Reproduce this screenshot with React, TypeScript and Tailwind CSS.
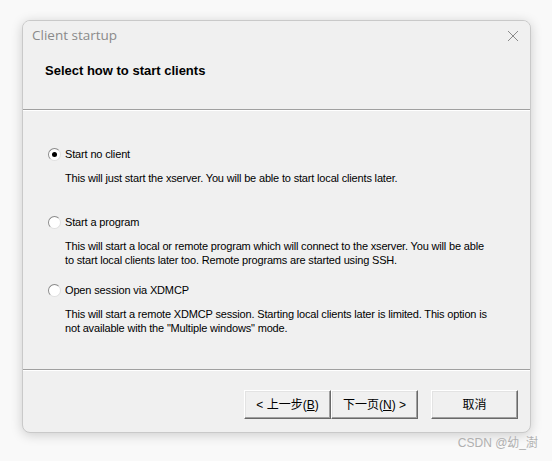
const sans = { fontFamily: '"Liberation Sans", "Noto Sans CJK SC", sans-serif' };

function Radio({ checked }: { checked?: boolean }) {
  return (
    <span className="relative mt-[1px] flex h-[13px] w-[13px] shrink-0 items-center justify-center rounded-full border border-[#8a8a8a] border-b-[#e0e0e0] border-r-[#e0e0e0] bg-white">
      {checked ? <span className="h-[5px] w-[5px] rounded-full bg-black" /> : null}
    </span>
  );
}

function Option({
  label,
  desc,
  checked,
}: {
  label: string;
  desc: string[];
  checked?: boolean;
}) {
  return (
    <div className="flex h-[68px] flex-col">
      <div className="flex items-center gap-[4px] pl-[25px]">
        <Radio checked={checked} />
        <span className="text-[11px] tracking-[-0.15px] text-black">{label}</span>
      </div>
      <div className="mt-[8px] pl-[42px] text-[11px] leading-[14px] tracking-[-0.17px] text-black">
        {desc.map((d) => (
          <div key={d}>{d}</div>
        ))}
      </div>
    </div>
  );
}

function Btn({ children }: { children: React.ReactNode }) {
  return (
    <button
      type="button"
      className="flex h-[29px] w-[87px] items-center justify-center border border-[#ffffff] border-b-[#696969] border-r-[#696969] bg-[#f0f0f0] text-[12px] text-black shadow-[inset_-1px_-1px_0_#a0a0a0,inset_1px_1px_0_#e3e3e3]"
    >
      {children}
    </button>
  );
}

export default function App() {
  return (
    <div className="relative h-[461px] w-[552px] bg-[#f9f9f9]" style={sans}>
      <div className="absolute left-[22px] top-[20px] flex h-[413px] w-[509px] flex-col overflow-hidden rounded-[8px] border border-[#c9c9c9] bg-[#f0f0f0] shadow-[0_2px_12px_rgba(0,0,0,0.18)]">
        <div className="flex h-[28px] items-center justify-between bg-[#f0f0f0] pl-[9px] pr-[9px]">
          <span className="text-[13.5px] text-[#8a8a8a]" style={{ fontFamily: '"Open Sans", "Liberation Sans", sans-serif' }}>
            Client startup
          </span>
          <svg width="12" height="12" viewBox="0 0 12 12" className="mr-[2px] mt-[2px]">
            <path d="M1 1L11 11M11 1L1 11" stroke="#8a8a8a" strokeWidth="1" />
          </svg>
        </div>
        <div className="h-[60px] bg-[#f0f0f0] pl-[22px] pt-[9px]">
          <span className="text-[13px] font-bold text-black">Select how to start clients</span>
        </div>
        <div className="h-px bg-[#a0a0a0]" />
        <div className="h-px bg-white" />
        <div className="flex flex-1 flex-col pt-[35px]">
          <Option
            checked
            label="Start no client"
            desc={["This will just start the xserver. You will be able to start local clients later."]}
          />
          <Option
            label="Start a program"
            desc={[
              "This will start a local or remote program which will connect to the xserver. You will be able",
              "to start local clients later too. Remote programs are started using SSH.",
            ]}
          />
          <Option
            label="Open session via XDMCP"
            desc={[
              "This will start a remote XDMCP session. Starting local clients later is limited. This option is",
              'not available with the "Multiple windows" mode.',
            ]}
          />
        </div>
        <div className="h-px bg-[#a0a0a0]" />
        <div className="h-px bg-white" />
        <div className="flex h-[61px] items-start justify-end pr-[12px] pt-[19px]">
          <Btn>
            &lt; 上一步(<u>B</u>)
          </Btn>
          <Btn>
            下一页(<u>N</u>) &gt;
          </Btn>
          <div className="w-[13px]" />
          <Btn>取消</Btn>
        </div>
      </div>
      <div className="absolute bottom-[9px] right-[14px] text-[12px] text-[#b0b0b0]">CSDN @幼_澍</div>
    </div>
  );
}
